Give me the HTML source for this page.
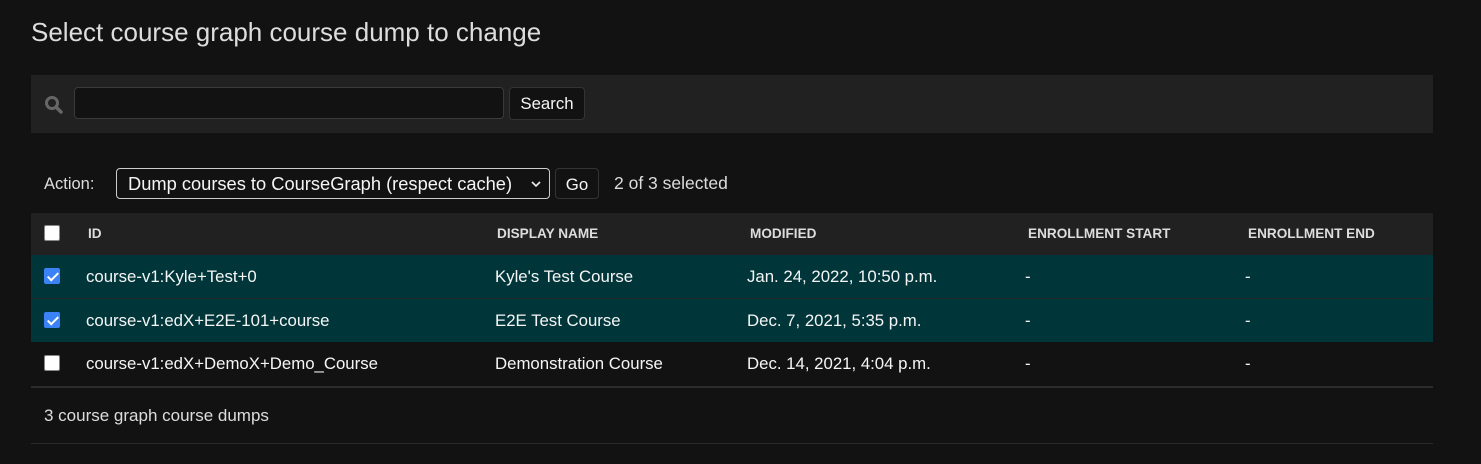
<!DOCTYPE html><html><head><style>
body{margin:0;background:#121212;width:1481px;height:464px;overflow:hidden;font-family:"Liberation Sans",sans-serif;color:#eee;position:relative}
.a{position:absolute;white-space:nowrap}
.t{font-size:16.8px;color:#f5f5f5}
.cb{position:absolute;width:16px;height:16px;border-radius:2px;background:#fff;border:1px solid #888;box-sizing:border-box}
.cb.on{background:#3b82f6;border-color:#3b82f6}
.cb.on:after{content:"";position:absolute;left:5px;top:1px;width:4px;height:9px;border:solid #fff;border-width:0 2px 2px 0;transform:rotate(45deg)}
.h{font-size:13.6px;font-weight:bold;color:#ddd;position:absolute;top:226px}
</style></head><body>
<div class="a" style="left:31px;top:17px;font-size:26px;font-weight:300;color:#ddd">Select course graph course dump to change</div>
<div class="a" style="left:31px;top:75px;width:1402px;height:58px;background:#212121"></div>
<svg class="a" style="left:44px;top:95px" width="20" height="20" viewBox="0 0 20 20"><circle cx="8" cy="8" r="5.5" fill="none" stroke="#666" stroke-width="3"/><path d="M12 12l5 5" stroke="#666" stroke-width="3.5" stroke-linecap="round"/></svg>
<div class="a" style="left:74px;top:87px;width:428px;height:30px;background:#121212;border:1px solid #3a3a3a;border-radius:4px"></div>
<div class="a t" style="left:509px;top:87px;width:76px;height:33px;background:#121212;border:1px solid #333;border-radius:4px;box-sizing:border-box;text-align:center;line-height:32px">Search</div>
<div class="a" style="left:44px;top:175px;font-size:16.5px;color:#ddd">Action:</div>
<div class="a t" style="left:116px;top:168px;width:434px;height:31px;border:1px solid #ccc;border-radius:4px;box-sizing:border-box;padding-left:11px;line-height:29px;font-size:18.3px">Dump courses to CourseGraph (respect cache)<svg style="position:absolute;right:8px;top:11px" width="10" height="8" viewBox="0 0 10 8"><path d="M1 2l4 4 4-4" fill="none" stroke="#eee" stroke-width="1.6"/></svg></div>
<div class="a t" style="left:555px;top:168px;width:44px;height:31px;border:1px solid #333;border-radius:4px;box-sizing:border-box;text-align:center;line-height:31px">Go</div>
<div class="a" style="left:614px;top:173px;font-size:17.5px;color:#ddd">2 of 3 selected</div>
<div class="a" style="left:31px;top:213px;width:1402px;height:42px;background:#212121"></div>
<div class="cb" style="left:44px;top:225px"></div>
<div class="h" style="left:88px">ID</div><div class="h" style="left:497px">DISPLAY NAME</div><div class="h" style="left:750px">MODIFIED</div><div class="h" style="left:1028px">ENROLLMENT START</div><div class="h" style="left:1248px">ENROLLMENT END</div>
<div class="a" style="left:31px;top:255px;width:1402px;height:43px;background:#00363a;border-bottom:1px solid #1f2a2b"></div>
<div class="a" style="left:31px;top:299px;width:1402px;height:43px;background:#00363a"></div>
<div class="a" style="left:31px;top:386px;width:1402px;height:2px;background:#2c2c2c"></div>
<div class="a" style="left:31px;top:443px;width:1402px;height:1px;background:#2a2a2a"></div>
<div class="cb on" style="left:44px;top:268px"></div><div class="cb on" style="left:44px;top:312px"></div><div class="cb" style="left:44px;top:355px"></div>
<div class="a t" style="left:86px;top:267px">course-v1:Kyle+Test+0</div><div class="a t" style="left:495px;top:267px">Kyle's Test Course</div><div class="a t" style="left:747px;top:267px">Jan. 24, 2022, 10:50 p.m.</div><div class="a t" style="left:1025px;top:267px">-</div><div class="a t" style="left:1245px;top:267px">-</div>
<div class="a t" style="left:86px;top:311px">course-v1:edX+E2E-101+course</div><div class="a t" style="left:495px;top:311px">E2E Test Course</div><div class="a t" style="left:747px;top:311px">Dec. 7, 2021, 5:35 p.m.</div><div class="a t" style="left:1025px;top:311px">-</div><div class="a t" style="left:1245px;top:311px">-</div>
<div class="a t" style="left:86px;top:354px">course-v1:edX+DemoX+Demo_Course</div><div class="a t" style="left:495px;top:354px">Demonstration Course</div><div class="a t" style="left:747px;top:354px">Dec. 14, 2021, 4:04 p.m.</div><div class="a t" style="left:1025px;top:354px">-</div><div class="a t" style="left:1245px;top:354px">-</div>
<div class="a" style="left:44px;top:406px;font-size:17px;color:#ddd">3 course graph course dumps</div>
</body></html>
